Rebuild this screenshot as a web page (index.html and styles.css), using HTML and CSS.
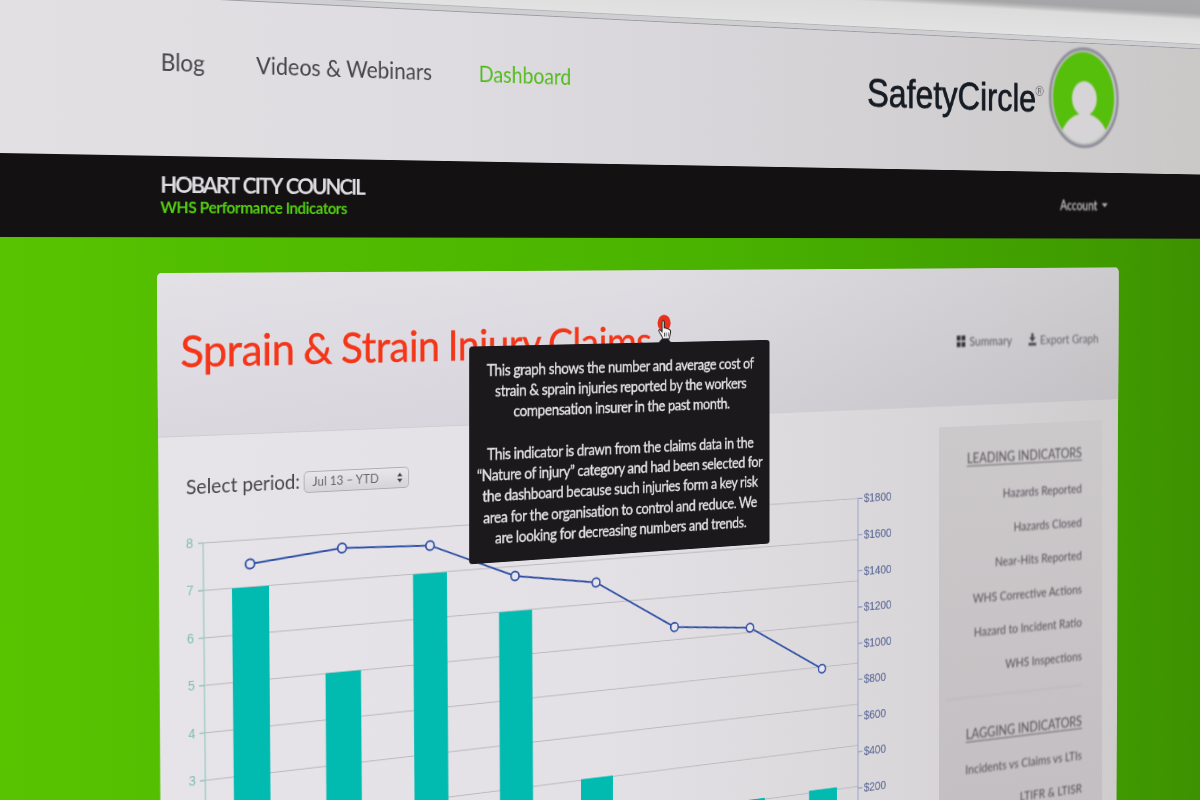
FILE: index.html
```html
<!DOCTYPE html>
<html lang="en">
<head>
<meta charset="utf-8">
<title>SafetyCircle – WHS Performance Indicators</title>
<link rel="stylesheet" href="styles.css">
</head>
<body>
<div class="viewport">
<div class="page">
  <div class="chrome"></div>
  <div class="strip"></div>
  <header class="header">
    <nav class="nav">
      <a>Blog</a>
      <a>Videos &amp; Webinars</a>
      <a class="active">Dashboard</a>
    </nav>
    <div class="brand">
      <span class="brand-name">SafetyCircle</span><span class="brand-mark">®</span>
      <svg class="brand-logo" viewBox="0 0 113 128">
        <defs><clipPath id="face"><ellipse cx="56" cy="64" rx="49.500" ry="58"/></clipPath></defs>
        <ellipse cx="56.500" cy="64" rx="54.500" ry="62" fill="#c3c2ca" stroke="#8f8e98" stroke-width="4"/>
        <g clip-path="url(#face)">
          <rect width="113" height="128" fill="#56bf0b"/>
          <ellipse cx="57" cy="130" rx="42" ry="46" fill="#d6d4d6"/>
          <ellipse cx="57" cy="65" rx="20" ry="22" fill="#d6d4d6"/>
          <rect x="50" y="78" width="14" height="14" fill="#d6d4d6"/>
        </g>
      </svg>
    </div>
  </header>
  <div class="bar">
    <div>
      <div class="org">HOBART CITY COUNCIL</div>
      <div class="sub">WHS Performance Indicators</div>
    </div>
    <div class="account">Account <i class="caret"></i></div>
  </div>
  <main class="main">
    <section class="panel">
      <div class="panel-head">
        <div class="title-row">
          <h1>Sprain &amp; Strain Injury Claims</h1>
          <svg class="info" viewBox="0 0 22 34">
            <ellipse cx="10" cy="11" rx="9.500" ry="10.500" fill="#e9301a"/>
            <path d="M7 22V9.500c0-2.500 3.200-2.500 3.200 0V17l2 .3 2.400.8 2.600.8c1.800.5 2.300 1.500 2.200 3l-1 6-1 3H8.500L5 25l-3-4.500c.5-2 3-1.500 5 1.500z" fill="#f4f2f2" stroke="#1c1a1b" stroke-width="1.200"/>
            <path d="M10.500 23v5M13.200 23v5M16 23v5" stroke="#1c1a1b" stroke-width=".9"/>
          </svg>
          <div class="tooltip">
            <p>This graph shows the number and average cost of<br>strain &amp; sprain injuries reported by the workers<br>compensation insurer in the past month.</p>
            <p>This indicator is drawn from the claims data in the<br>“Nature of injury” category and had been selected for<br>the dashboard because such injuries form a key risk<br>area for the organisation to control and reduce. We<br>are looking for decreasing numbers and trends.</p>
          </div>
        </div>
        <div class="tools">
          <span class="tool"><svg width="13" height="14" viewBox="0 0 13 14"><path d="M0 0h5.700v6H0zM7.300 0H13v6H7.300zM0 8h5.700v6H0zM7.300 8H13v6H7.300z" fill="#333137"/></svg>Summary</span>
          <span class="tool export"><svg width="12" height="16" viewBox="0 0 12 16"><path d="M4.300 0h3.400v5H11l-5 6-5-6h3.300zM0 12h12v3.500H0z" fill="#48464b"/></svg>Export Graph</span>
        </div>
      </div>
      <div class="panel-body">
        <div class="chart-col">
          <div class="period">
            <label>Select period:</label>
            <span class="select">Jul 13 – YTD <svg width="6" height="11" viewBox="0 0 7 12"><path d="M3.500 0L7 4.500H0zM3.500 12L0 7.500h7z" fill="#444248"/></svg></span>
          </div>
          <svg class="chart" viewBox="162 530 990 470">
            <g class="grid">
              <path d="M206 555.5L1032 550.3M206 605L1032 599.8M206.500 654.500L1032 649.300M207 704L1032 698.800M207.500 753.500L1032 748.300M208 803L1032 797.800M208.500 852.500L1032 847.300M209 902L1032 896.800M209 951.500L1032 946.300"/>
            </g>
            <path class="axis-l" d="M211.500 555.500L216 1000M206 555.500h5.500M206.500 605h5.500M207 654.500h5.500M207.500 704h5.500M208 753.500h5.500M208.500 803h5.500M209 852.500h5.500"/>
            <path class="axis-r" d="M1032.500 550V1000M1032 550.300h7M1032 593.900h7M1032 637.400h7M1032 681h7M1032 724.500h7M1032 768.100h7M1032 811.700h7M1032 855.200h7M1032 898.800h7"/>
            <g class="bars">
              <path d="M243 605H284L287 1000H247zM347.800 702.700H388.600L391 1000H350zM449.600 603.700H490L493 1000H452.600zM553.400 652.500H594.300L596.500 1000H555.500zM656 848.500H697V1000H656zM859.500 896H900.700V1000H859.500zM962.400 894.500H1002V1000H962.400z"/>
            </g>
            <g class="labels-l">
              <text x="193" y="560">8</text><text x="193.500" y="609.500">7</text><text x="194" y="659">6</text><text x="195" y="708.500">5</text><text x="195.500" y="758">4</text><text x="196" y="807.500">3</text>
            </g>
            <g class="labels-r">
              <text x="1041" y="555.500">$1800</text><text x="1041" y="599">$1600</text><text x="1041" y="642.600">$1400</text><text x="1041" y="686.200">$1200</text><text x="1041" y="729.700">$1000</text><text x="1041" y="773.300">$800</text><text x="1041" y="816.900">$600</text><text x="1041" y="860.400">$400</text><text x="1041" y="904">$200</text>
            </g>
            <path class="trend" d="M263 580.600L366.700 570L469.800 573.400L573.200 613.500L675.300 627.500L777.800 685.700L880 694.200L980.800 750.800"/>
            <g class="dots">
              <circle cx="263" cy="580.600" r="5"/><circle cx="366.700" cy="570" r="5"/><circle cx="469.800" cy="573.400" r="5"/><circle cx="573.200" cy="613.500" r="5"/><circle cx="675.300" cy="627.500" r="5"/><circle cx="777.800" cy="685.700" r="5"/><circle cx="880" cy="694.200" r="5"/><circle cx="980.800" cy="750.800" r="5"/>
            </g>
          </svg>
        </div>
        <aside class="side">
          <h2>LEADING INDICATORS</h2>
          <ul>
            <li>Hazards Reported</li>
            <li>Hazards Closed</li>
            <li>Near-Hits Reported</li>
            <li>WHS Corrective Actions</li>
            <li>Hazard to Incident Ratio</li>
            <li>WHS Inspections</li>
          </ul>
          <h2 class="second">LAGGING INDICATORS</h2>
          <ul>
            <li>Incidents vs Claims vs LTIs</li>
            <li>LTIFR &amp; LTISR</li>
          </ul>
        </aside>
      </div>
    </section>
  </main>
</div>
</div>
</body>
</html>
```
FILE: styles.css
```css
* { box-sizing: border-box; }
body { margin: 0; background: #4bb000; font-family: Lato, "Open Sans", sans-serif; }
h1, h2, p, ul { margin: 0; padding: 0; font-weight: 400; }
ul { list-style: none; }

.viewport { width: 1200px; height: 800px; overflow: hidden; }

/* The flat 1600px page, tilted away towards the right. */
.page {
  width: 1600px;
  height: 1080px;
  margin-top: -80px;
  display: flex;
  flex-direction: column;
  transform-origin: 0 80px;
  transform: matrix3d(1, 0.04807, 0, 0.000197, 0, 1, 0, 0, 0, 0, 1, 0, 0, 0, 0, 1);
}

.chrome { flex: none; height: 62px; background: linear-gradient(180deg, #a9a9ab 0, #a5a4a6 22px, #b8b8b9 26px, #dcdcdd 31px, #e2e2e2 62px); }
.strip { flex: none; height: 7px; background: #cfced1; border-top: 1px solid #b5b4b8; border-bottom: 1.5px solid #9b9da2; }

.header {
  flex: none;
  height: 163.5px;
  padding: 0 165px 0 166px;
  display: flex;
  justify-content: space-between;
  align-items: flex-start;
  background: linear-gradient(90deg, #e2e0e2 0, #dedce0 30%, #d5d3d6 60%, #cac7c7 100%);
}
.nav { display: flex; gap: 56.300px; padding-top: 52px; font-size: 24.200px; line-height: 30px; color: #48454a; white-space: nowrap; }
.nav .active { color: #51bb1c; }
.brand { display: flex; align-items: flex-start; }
.brand-name { margin-top: 48.300px; font: 47.500px/50px "Liberation Sans", Arial, sans-serif; color: #171c24; -webkit-text-stroke: .9px #171c24; }
.brand-mark { margin: 53px 8px 0 -1px; font: 18px/20px "Liberation Sans", Arial, sans-serif; color: #77757c; filter: blur(.7px); }
.brand-logo { width: 113px; height: 128px; margin-top: 5.300px; filter: blur(.8px); }

.bar {
  flex: none;
  height: 84.200px;
  padding: 17px 183px 0 165.500px;
  display: flex;
  justify-content: space-between;
  background: #131112;
}
.org { font-size: 23.500px; line-height: 24px; font-weight: 700; letter-spacing: -2.150px; word-spacing: 2px; color: #dddbe0; white-space: nowrap; }
.sub { margin-top: 2px; font-size: 17px; line-height: 20px; font-weight: 700; letter-spacing: -.530px; color: #54cf10; white-space: nowrap; }
.account { padding-top: 15px; font-size: 16.500px; line-height: 20px; color: #c8c6ca; -webkit-text-stroke: .3px #c8c6ca; filter: blur(1.100px); display: flex; align-items: center; gap: 7px; height: 35px; }
.caret { border: 5px solid transparent; border-top: 5px solid #b8b6ba; border-bottom: 0; }

.main {
  flex: 1;
  padding: 37.300px 165px 0 162px;
  background: linear-gradient(90deg, #58c400 0, #52be00 12%, #4ab300 50%, #42a300 75%, #3f9900 90%, #3c9000 100%);
}

.panel {
  height: 760px;
  border-radius: 5px 6px 0 0;
  clip-path: polygon(0 0, 100% 0, calc(100% - 4px) 100%, 5px 100%);
  background: linear-gradient(90deg, #e6e4e9 0, #e3e1e5 40%, #d9d6d9 75%, #cfccce 100%);
}
.panel-head {
  height: 170px;
  padding: 55.400px 33px 0 25px;
  display: flex;
  justify-content: space-between;
  align-items: flex-start;
  border-radius: 5px 6px 0 0;
  background: linear-gradient(180deg, rgba(255,255,255,.12), rgba(160,158,170,.08)), linear-gradient(90deg, #dfdde3 0, #dbd9df 45%, #cfcdd1 75%, #c6c4c6 100%);
  border-bottom: 1px solid #cfcdd2;
}
.title-row { position: relative; z-index: 2; display: flex; align-items: flex-start; }
h1 { font-size: 47px; line-height: 50px; letter-spacing: -.550px; word-spacing: -1.500px; color: #f53518; -webkit-text-stroke: .4px #f53518; white-space: nowrap; }
.info { position: absolute; left: 567.500px; top: -4px; z-index: 3; width: 20px; height: 31px; }
.tooltip {
  position: absolute;
  left: 330px;
  top: 27.500px;
  width: 389.500px;
  height: 240.500px;
  padding-top: 15px;
  border-radius: 4px;
  background: #1b191b;
  color: #e5e3e6;
  font-size: 17px;
  line-height: 23.250px;
  letter-spacing: -.470px;
  -webkit-text-stroke: .35px #e5e3e6;
  text-align: center;
  white-space: nowrap;
}
.tooltip p + p { margin-top: 23.250px; }
.tooltip::before { content: ""; position: absolute; left: 240px; top: -8px; border: 8px solid transparent; border-top: 0; border-bottom: 8px solid #1b191b; }

.tools { display: flex; gap: 26px; padding-top: 24.500px; font-size: 16px; line-height: 20px; color: #5e5b61; filter: blur(1px); white-space: nowrap; }
.tool { display: flex; align-items: center; gap: 6px; }
.export { color: #68656b; }

.panel-body { display: flex; justify-content: space-between; }
.chart-col { width: 990px; padding-top: 42.500px; }
.period { display: flex; align-items: center; height: 22px; padding-left: 31px; font-size: 21px; color: #48454b; }
.period label { width: 130px; padding-bottom: 4px; white-space: nowrap; }
.select { width: 121.500px; height: 22.500px; padding: 0 7px 0 9px; display: flex; align-items: center; justify-content: space-between; font-size: 13.500px; color: #66636a; background: linear-gradient(#e8e6ea, #d6d4da); border: 1.500px solid #aeabb2; border-radius: 5px; white-space: nowrap; }
.chart { display: block; width: 990px; height: 470px; margin-top: 21.500px; }
.grid path { stroke: #bab6ba; stroke-width: 1; fill: none; }
.axis-l { stroke: #96cac4; stroke-width: 1.300; fill: none; }
.axis-r { stroke: #8797c6; stroke-width: 1.300; fill: none; }
.bars path { fill: #01bbb1; }
.labels-l text { font: 14px "Liberation Sans", Arial, sans-serif; fill: #80bdb4; }
.labels-r text { font: 14.500px "Liberation Sans", Arial, sans-serif; fill: #64709c; stroke: #64709c; stroke-width: .2; }
.trend { fill: none; stroke: #2f4fa5; stroke-width: 2; }
.dots circle { fill: #e6e5ee; stroke: #3653a5; stroke-width: 2; }

.side {
  width: 255.500px;
  height: 620px;
  margin: 25px 27.500px 0 0;
  padding: 26.500px 32.500px 0 10px;
  text-align: right;
  font-size: 16px;
  line-height: 42.600px;
  color: #545157;
  background: linear-gradient(180deg, #ccc9cb, #c0bcbf);
  white-space: nowrap;
}
.side h2 { font-size: 17.300px; line-height: 28px; height: 28px; margin-bottom: 9.500px; text-decoration: underline; text-underline-offset: 3px; filter: blur(1px); }
.side li { filter: blur(1.200px); }
.side .second { margin-top: 15px; padding-top: 31.500px; height: 69.500px; border-top: 1px solid #b9b6ba; margin-bottom: -1.500px; }
```
